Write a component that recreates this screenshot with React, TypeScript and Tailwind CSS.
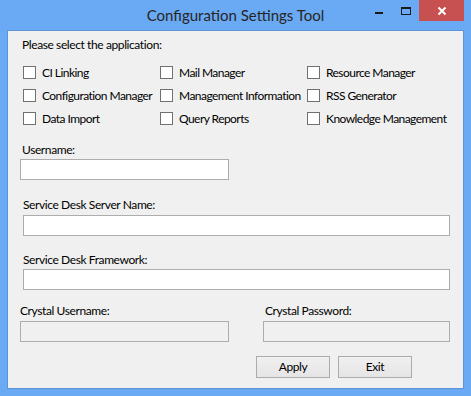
import React from "react";

const font = { fontFamily: 'Lato, "Noto Sans", sans-serif' };

function Check({ label }: { label: string }) {
  return (
    <div className="flex items-center h-[13px]">
      <div className="w-[13px] h-[13px] border border-[#707070] bg-white shrink-0" />
      <span className="ml-[6px] text-[12px] leading-[13px] tracking-[-0.55px] text-black whitespace-nowrap">{label}</span>
    </div>
  );
}

export default function App() {
  return (
    <div className="w-[471px] h-[396px] bg-[#6aa9f3] flex flex-col" style={font}>
      {/* title bar */}
      <div className="h-[30px] flex">
        <div className="w-[105px]" />
        <div className="flex-1 flex justify-center items-center text-[15px] text-[#262626] pt-[1px]">
          Configuration Settings Tool
        </div>
        <div className="flex h-[21px]">
          <div className="w-[26px] flex items-start justify-center pt-[12px]">
            <div className="w-[8px] h-[2px] bg-[#1a1a1a]" />
          </div>
          <div className="w-[27px] flex items-start justify-center pt-[7px]">
            <div className="w-[10px] h-[8px] border border-[#1a1a1a] border-t-2" />
          </div>
          <div className="w-[45px] bg-[#c75050] flex items-center justify-center">
            <svg width="10" height="10" viewBox="0 0 10 10">
              <path d="M1.5 1.5 L8.5 8.5 M8.5 1.5 L1.5 8.5" stroke="white" strokeWidth="2" />
            </svg>
          </div>
          <div className="w-[7px]" />
        </div>
      </div>
      {/* client */}
      <div className="ml-[7px] w-[457px] h-[359px] border border-[#5d94d6] bg-[#f0f0f0] text-[12px] tracking-[-0.4px] text-black">
        <div className="pl-[14px] pt-[6px] h-[22px] leading-[16px]">Please select the application:</div>
        <div className="grid grid-cols-[137px_147px_150px] gap-y-[10px] pl-[15px] mt-[13px]">
          <Check label="CI Linking" />
          <Check label="Mail Manager" />
          <Check label="Resource Manager" />
          <Check label="Configuration Manager" />
          <Check label="Management Information" />
          <Check label="RSS Generator" />
          <Check label="Data Import" />
          <Check label="Query Reports" />
          <Check label="Knowledge Management" />
        </div>

        <div className="pl-[14px] mt-[17px] h-[16px] leading-[16px]">Username:</div>
        <div className="ml-[12px] mt-[1px] w-[209px] h-[21px] bg-white border border-[#adadad]" />

        <div className="pl-[15px] mt-[17px] h-[16px] leading-[16px]">Service Desk Server Name:</div>
        <div className="ml-[15px] mt-[2px] w-[427px] h-[21px] bg-white border border-[#adadad]" />

        <div className="pl-[15px] mt-[16px] h-[16px] leading-[16px]">Service Desk Framework:</div>
        <div className="ml-[15px] mt-[1px] w-[427px] h-[21px] bg-white border border-[#adadad]" />

        <div className="flex mt-[13px]">
          <div className="ml-[12px] w-[209px]">
            <div className="h-[16px] leading-[16px]">Crystal Username:</div>
            <div className="mt-[2px] w-[209px] h-[21px] bg-[#f0f0f0] border border-[#adadad]" />
          </div>
          <div className="ml-[34px] w-[187px]">
            <div className="pl-[2px] h-[16px] leading-[16px]">Crystal Password:</div>
            <div className="mt-[2px] w-[187px] h-[21px] bg-[#f0f0f0] border border-[#adadad]" />
          </div>
        </div>

        <div className="flex mt-[14px] pl-[248px] gap-[8px]">
          <div className="w-[74px] h-[22px] border border-[#acacac] bg-gradient-to-b from-[#f0f0f0] to-[#e5e5e5] flex items-center justify-center leading-[16px]">Apply</div>
          <div className="w-[74px] h-[22px] border border-[#acacac] bg-gradient-to-b from-[#f0f0f0] to-[#e5e5e5] flex items-center justify-center leading-[16px]">Exit</div>
        </div>
      </div>
    </div>
  );
}
